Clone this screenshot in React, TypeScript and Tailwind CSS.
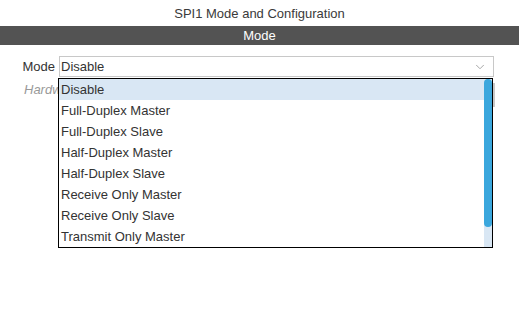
import { ChevronDown } from "lucide-react";

const options = [
  "Disable",
  "Full-Duplex Master",
  "Full-Duplex Slave",
  "Half-Duplex Master",
  "Half-Duplex Slave",
  "Receive Only Master",
  "Receive Only Slave",
  "Transmit Only Master",
];

export default function App() {
  return (
    <div className="relative h-[321px] w-[519px] bg-white text-[13px] text-[#333] font-['Liberation_Sans',Arial,sans-serif]">
      {/* Header */}
      <div className="flex h-[26px] items-center justify-center pt-[1px] text-[#3a3a3a]">
        SPI1 Mode and Configuration
      </div>
      <div className="flex h-[19px] items-center justify-center bg-[#535353] text-white">
        Mode
      </div>

      {/* Mode select */}
      <div className="mt-[11px] flex items-center">
        <span className="w-[56px] pr-[1px] text-right">Mode</span>
        <div className="ml-[3px] flex h-[21px] w-[435px] items-center justify-between border border-[#c8c8c8] pl-[1px] pr-[6px]">
          <span>Disable</span>
          <ChevronDown className="h-[14px] w-[14px] text-[#9a9a9a]" strokeWidth={1.5} />
        </div>
      </div>

      <div className="mt-[3px] pl-[24px] italic text-[#999]">Hardware NSS Signal</div>

      {/* small gray strip peeking out at the right edge */}
      <div className="absolute left-[492px] top-[83px] h-[24px] w-[3px] bg-[#c8c8c8]" />

      {/* Open dropdown list */}
      <div className="absolute left-[58px] top-[78px] flex h-[170px] w-[435px] border border-black bg-white">
        <ul className="flex-1">
          {options.map((opt, i) => (
            <li
              key={opt}
              className={
                "flex h-[21px] items-center pl-[2px] " +
                (i === 0 ? "bg-[#d9e7f4]" : "")
              }
            >
              {opt}
            </li>
          ))}
        </ul>
        {/* scrollbar */}
        <div className="flex w-[8px] flex-col bg-[#d9e7f4]">
          <div className="h-[148px] rounded-full bg-[#3ba7dd]" />
        </div>
      </div>
    </div>
  );
}
